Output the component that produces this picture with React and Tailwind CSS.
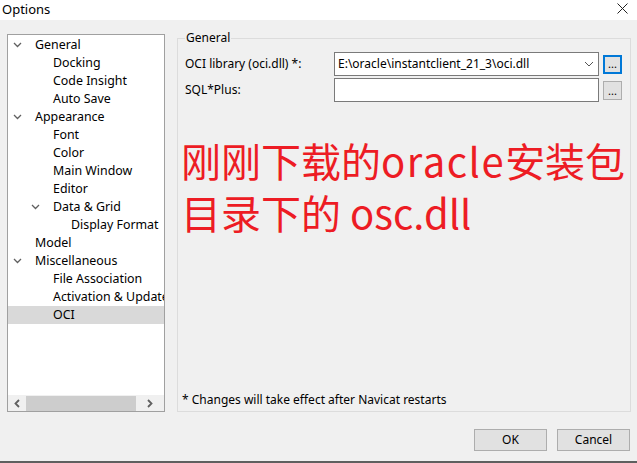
import React from 'react';

const treeItems = [
  { label: 'General', level: 0, open: true },
  { label: 'Docking', level: 1 },
  { label: 'Code Insight', level: 1 },
  { label: 'Auto Save', level: 1 },
  { label: 'Appearance', level: 0, open: true },
  { label: 'Font', level: 1 },
  { label: 'Color', level: 1 },
  { label: 'Main Window', level: 1 },
  { label: 'Editor', level: 1 },
  { label: 'Data & Grid', level: 1, open: true },
  { label: 'Display Format', level: 2 },
  { label: 'Model', level: 0 },
  { label: 'Miscellaneous', level: 0, open: true },
  { label: 'File Association', level: 1 },
  { label: 'Activation & Update', level: 1 },
  { label: 'OCI', level: 1, selected: true },
];

const indent = ['pl-0', 'pl-[18px]', 'pl-[36px]'];

const Chevron = () => (
  <svg width="9" height="6" viewBox="0 0 9 6">
    <polyline points="1,1 4.5,4.5 8,1" fill="none" stroke="#606060" strokeWidth="1.3" />
  </svg>
);

const TreeRow = ({ item }) => (
  <div
    className={`h-[18px] flex items-center whitespace-nowrap ${indent[item.level]} ${
      item.selected ? 'bg-[#d9d9d9]' : ''
    }`}
  >
    <div className="w-[18px] h-[18px] flex items-center justify-center shrink-0">
      {item.open && <Chevron />}
    </div>
    <span className="ml-[9px] text-[12.4px]">{item.label}</span>
  </div>
);

const SmallButton = ({ focused }) => (
  <button
    className={`w-[19px] h-[19px] flex items-end justify-center pb-[3px] text-[11px] leading-none bg-[#e1e1e1] ${
      focused ? 'border-2 border-[#0078d7]' : 'border border-[#adadad]'
    }`}
  >
    ...
  </button>
);

const App = () => {
  return (
    <div
      className="w-[637px] h-[463px] bg-[#f0f0f0] flex flex-col text-[12px] text-black border-b-2 border-[#5f5f5f] overflow-hidden"
      style={{ fontFamily: "'Noto Sans', 'Noto Sans CJK SC', sans-serif" }}
    >
      {/* title bar */}
      <div className="h-[20px] bg-white flex items-center justify-between shrink-0">
        <span className="pl-[2px] text-[13px] leading-none -mt-[2px]">Options</span>
        <svg width="11" height="11" viewBox="0 0 11 11" className="mr-[9px] -mt-[3px]">
          <path d="M0.5 0.5 L10.5 10.5 M10.5 0.5 L0.5 10.5" stroke="#222" strokeWidth="1" />
        </svg>
      </div>

      <div className="flex flex-1 pl-[7px]">
        {/* tree */}
        <div className="mt-[14px] w-[158px] h-[378px] border border-[#a0a0a0] bg-white flex flex-col overflow-hidden">
          <div className="flex-1 pt-[1px] overflow-hidden">
            {treeItems.map((item) => (
              <TreeRow key={item.label} item={item} />
            ))}
          </div>
          <div className="h-[16px] bg-[#f0f0f0] flex items-center">
            <div className="w-[18px] flex justify-center">
              <svg width="6" height="9" viewBox="0 0 6 9">
                <polyline points="5,1 1.5,4.5 5,8" fill="none" stroke="#606060" strokeWidth="1.8" />
              </svg>
            </div>
            <div className="w-[110px] h-[15px] bg-[#cdcdcd]" />
            <div className="flex-1 flex justify-center">
              <svg width="6" height="9" viewBox="0 0 6 9">
                <polyline points="1,1 4.5,4.5 1,8" fill="none" stroke="#606060" strokeWidth="1.8" />
              </svg>
            </div>
          </div>
        </div>

        {/* right side */}
        <div className="ml-[12px] flex flex-col">
          <fieldset className="mt-[10px] w-[454px] h-[382px] border border-[#dcdcdc] pl-[7px]">
            <legend className="px-[1px] leading-[16px]">General</legend>

            <div className="h-[364px] flex flex-col">
              <div className="mt-[6px] flex items-center">
                <span className="w-[149px]">OCI library (oci.dll) *:</span>
                <div className="w-[265px] h-[24px] border border-[#7a7a7a] bg-white flex items-center pl-[3px] pr-[4px]">
                  <span className="flex-1 whitespace-nowrap">E:\oracle\instantclient_21_3\oci.dll</span>
                  <svg width="10" height="6" viewBox="0 0 10 6">
                    <polyline points="1,1 5,5 9,1" fill="none" stroke="#555" strokeWidth="1" />
                  </svg>
                </div>
                <div className="ml-[4px]">
                  <SmallButton focused />
                </div>
              </div>

              <div className="mt-[2px] flex items-center">
                <span className="w-[149px]">SQL*Plus:</span>
                <div className="w-[265px] h-[24px] border border-[#7a7a7a] bg-white" />
                <div className="ml-[4px]">
                  <SmallButton />
                </div>
              </div>

              <div
                className="mt-[32px] -ml-[4px] text-[40px] leading-[52px] text-[#ed1c24] whitespace-nowrap"
                style={{ fontFamily: "'Noto Sans CJK SC', 'Noto Sans', sans-serif" }}
              >
                <div>
                  刚刚下载的<span className="tracking-[1.5px]">oracle</span>安装包
                </div>
                <div>目录下的 osc.dll</div>
              </div>

              <div className="mt-auto mb-[1px] -ml-[3px]">* Changes will take effect after Navicat restarts</div>
            </div>
          </fieldset>
        </div>
      </div>

      {/* buttons */}
      <div className="h-[51px] flex justify-end items-start pt-[17px] pr-[7px] gap-[10px] shrink-0">
        <button className="w-[73px] h-[22px] bg-[#e1e1e1] border border-[#adadad]">OK</button>
        <button className="w-[73px] h-[22px] bg-[#e1e1e1] border border-[#adadad]">Cancel</button>
      </div>
    </div>
  );
};

export default App;
